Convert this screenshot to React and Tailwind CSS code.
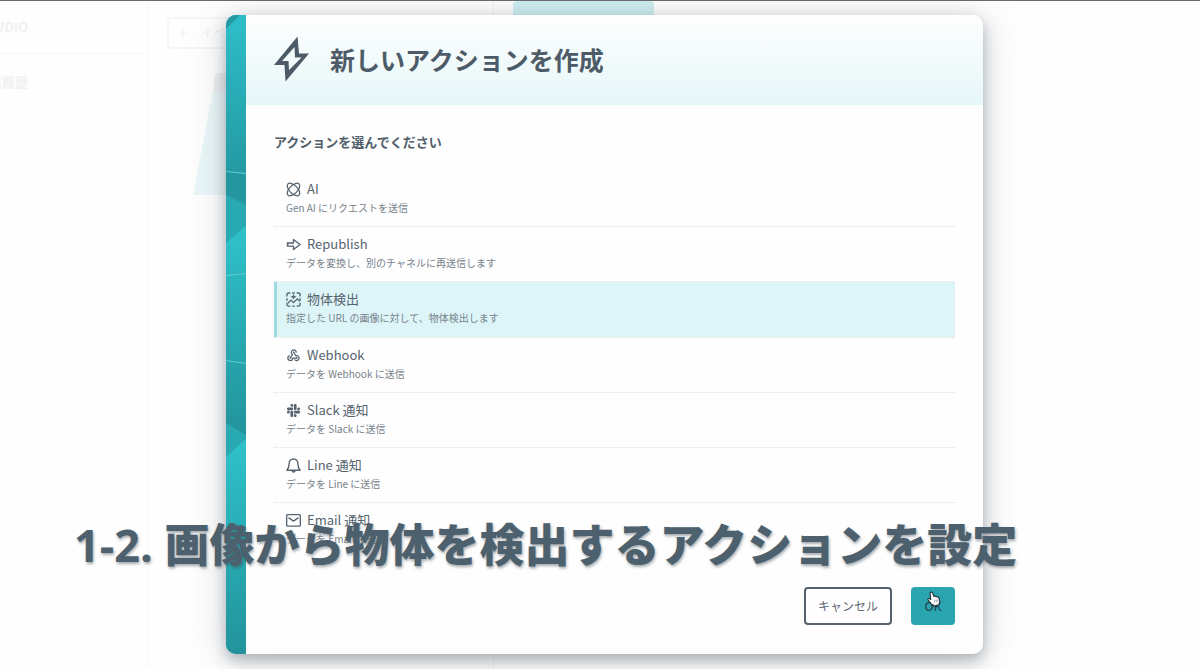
import { useState } from 'react';
import { MdWebhook } from 'react-icons/md';
import { FaSlack } from 'react-icons/fa';

function BoltIcon({ className }) {
  return (
    <svg className={className} viewBox="0 0 36 46" fill="currentColor" fillRule="evenodd" aria-hidden="true">
      <path d="M23.500 .5L25 17.500h10L11.500 45.500L10.500 29H0zM20.500 11L8 25h6.500l.5 9L27.500 21.500H21z" />
    </svg>
  );
}

function AtomIcon({ className }) {
  return (
    <svg className={className} viewBox="0 0 24 24" fill="none" stroke="currentColor" strokeWidth="2" aria-hidden="true">
      <ellipse cx="12" cy="12" rx="12.600" ry="6.400" transform="rotate(45 12 12)" />
      <ellipse cx="12" cy="12" rx="12.600" ry="6.400" transform="rotate(-45 12 12)" />
    </svg>
  );
}

function ArrowIcon({ className }) {
  return (
    <svg className={className} viewBox="0 0 24 24" fill="none" stroke="currentColor" strokeWidth="2.200" strokeLinejoin="round" aria-hidden="true">
      <path d="M2 9.500H12V4l10.500 8L12 20v-5.500H2l1-2.500z" />
    </svg>
  );
}

function DetectIcon({ className }) {
  return (
    <svg className={className} viewBox="0 0 24 24" fill="none" stroke="currentColor" strokeWidth="2.200" aria-hidden="true">
      <path d="M1.500 7V4a2.500 2.500 0 0 1 2.500-2.500h3M10 1.500h4M17 1.500h3A2.500 2.500 0 0 1 22.500 4v3M22.500 10v4M22.500 17v3a2.500 2.500 0 0 1-2.500 2.500h-3M14 22.500h-4M7 22.500H4A2.500 2.500 0 0 1 1.500 20v-3M1.500 14v-4" />
      <path d="M3 18l5-5 4 4 6-6 4 4" />
      <path d="M12 4v7M8.500 7.500h7" />
    </svg>
  );
}

function BellIcon({ className }) {
  return (
    <svg className={className} viewBox="0 0 24 24" fill="none" stroke="currentColor" strokeWidth="2.200" strokeLinejoin="round" aria-hidden="true">
      <path d="M12 1.500c-4.500 0-7 3.300-7 7.500 0 6-1.500 8-3.500 10.500h21C20.500 17 19 15 19 9c0-4.200-2.500-7.500-7-7.500z" />
      <path d="M9.500 20.500a2.600 2.600 0 0 0 5 0" />
    </svg>
  );
}

function MailIcon({ className }) {
  return (
    <svg className={className} viewBox="0 0 24 24" fill="none" stroke="currentColor" strokeWidth="2.200" strokeLinejoin="round" aria-hidden="true">
      <rect x="1" y="2.500" width="22" height="18.500" rx="2" />
      <path d="M4 7.500l8 5.500 8-5.500" />
    </svg>
  );
}

function HandCursor({ className }) {
  return (
    <svg className={className} viewBox="0 0 18 20" fill="#fff" stroke="#26343c" strokeWidth="1.500" strokeLinejoin="round" aria-hidden="true">
      <path d="M5 1.200c1-.4 1.900.1 2.200 1l1.500 4.300c.7-.7 1.900-.5 2.300.4.800-.5 1.800-.2 2.200.6.900-.3 1.800.2 2.100 1.100l1 3.400c.4 1.600 0 3-.9 4.200l.2 1.300-6.800 1.700-.7-1.300c-1.600-.4-3.200-1.900-4.600-3.900L1.300 11c-.6-1.100.8-2.300 1.900-1.500l1.600 1.300L4 3c-.2-.8.200-1.500 1-1.800z" />
      <path d="M9.300 11.500l.7 3M11.500 11l.7 3M13.500 10.500l.6 3" stroke="#7b868c" strokeWidth="1" />
    </svg>
  );
}

/* Faceted teal strip on the left edge of the dialog */
function SideStrip() {
  return (
    <svg className="w-5 shrink-0 self-stretch" viewBox="0 0 20 639" preserveAspectRatio="none" aria-hidden="true">
      <defs>
        <linearGradient id="top" x1="0" y1="0" x2="0" y2="1">
          <stop offset="0" stopColor="#2ebec8" />
          <stop offset="1" stopColor="#249aa3" />
        </linearGradient>
        <linearGradient id="mid" x1="0" y1="0" x2="0" y2="1">
          <stop offset="0" stopColor="#2fc2ca" />
          <stop offset="1" stopColor="#22939b" />
        </linearGradient>
      </defs>
      <rect width="20" height="639" fill="#29a9b1" />
      <path d="M0 0h20v158L0 156z" fill="url(#top)" />
      <path d="M0 0h14L0 14z" fill="#2599a1" />
      <path d="M0 156l20 2v32L0 180z" fill="#23969e" />
      <path d="M0 228l20-17v209L0 408z" fill="url(#mid)" />
      <path d="M0 442l20-18v215H0z" fill="url(#mid)" />
      <path d="M0 156.500l20 2M0 260.500l20-2M0 345.500l20 3" stroke="#5ccdd3" strokeWidth="1" />
    </svg>
  );
}

const actions = [
  { id: 'ai', name: 'AI', description: 'Gen AI にリクエストを送信', Icon: AtomIcon },
  { id: 'republish', name: 'Republish', description: 'データを変換し、別のチャネルに再送信します', Icon: ArrowIcon },
  { id: 'detect', name: '物体検出', description: '指定した URL の画像に対して、物体検出します', Icon: DetectIcon },
  { id: 'webhook', name: 'Webhook', description: 'データを Webhook に送信', Icon: MdWebhook },
  { id: 'slack', name: 'Slack 通知', description: 'データを Slack に送信', Icon: FaSlack },
  { id: 'line', name: 'Line 通知', description: 'データを Line に送信', Icon: BellIcon },
  { id: 'email', name: 'Email 通知', description: 'データを Email に送信', Icon: MailIcon },
];

function ActionRow({ action, selected, onSelect }) {
  const { Icon } = action;
  return (
    <li className="border-b border-dotted border-[#d9dee1] last:border-b-0">
      <button
        type="button"
        aria-pressed={selected}
        onClick={() => onSelect(action.id)}
        className={`block w-full border-l-3 pt-[7px] pl-[9px] text-left ${
          selected ? 'border-[#9adcdf] bg-[#def5f8] pb-[11px]' : 'border-transparent pb-[10px]'
        }`}
      >
        <span className="flex items-center gap-[6px] text-[13px] leading-5 text-[#56636f]">
          <Icon className="size-[15px] shrink-0" />
          {action.name}
        </span>
        <span className="mt-px block text-[10px] leading-4 text-[#76828c]">{action.description}</span>
      </button>
    </li>
  );
}

/* Faded studio screen behind the dialog */
function Backdrop() {
  return (
    <div className="flex min-h-screen border-t border-[#6b6b6e] bg-[#fefefe]" aria-hidden="true">
      <div className="w-[149px] shrink-0 border-r border-[#f9f9f9]">
        <div className="flex h-[53px] items-center border-b border-[#f1f9fa]">
          <div className="flex w-7 justify-end overflow-hidden text-[13px] font-bold whitespace-nowrap text-[#f1f1f2]">STUDIO</div>
        </div>
        <div className="mt-[18px] flex w-7 justify-end overflow-hidden text-[13px] font-bold whitespace-nowrap text-[#f1f1f2]">受信履歴</div>
      </div>
      <div className="w-[345px] shrink-0 border-r border-[#f3f4f5] pt-4 pl-[18px]">
        <div className="flex h-8 w-40 items-center gap-3 rounded border-2 border-[#f5f5f6] px-2 text-xs text-[#f1f1f2]">
          <span>＋</span>
          <span>イベント</span>
        </div>
        <svg className="mt-6 ml-[26px] h-[122px] w-[140px]" viewBox="0 0 140 122">
          <path d="M20 18L22 3q1-3 4-3h114v18z" fill="#eeeef0" />
          <path d="M20 18h120v104H0z" fill="#eaf7f8" />
        </svg>
      </div>
      <div className="flex-1 pl-[19px]">
        <div className="h-20 w-[141px] rounded-t bg-[#cdeff1]"></div>
      </div>
    </div>
  );
}

export default function App() {
  const [selected, setSelected] = useState('detect');

  return (
    <div className="relative overflow-hidden font-['Noto_Sans_CJK_JP',sans-serif]">
      <Backdrop />

      <div className="absolute inset-0 flex items-start justify-center pt-[15px] pl-[9px]">
        <div
          role="dialog"
          aria-labelledby="dialog-title"
          className="flex w-full max-w-[757px] overflow-hidden rounded-[10px] bg-[#fefefe] shadow-[0_6px_14px_rgba(62,78,92,0.35),0_4px_36px_rgba(62,72,82,0.22)]"
        >
          <SideStrip />
          <div className="min-w-0 flex-1">
            <div className="flex h-[90px] items-center gap-5 bg-linear-to-b from-[#fefefe] to-[#e6f7f9] px-7 pb-0.5 text-[#4d5b68]">
              <BoltIcon className="h-[46px] w-9 shrink-0" />
              <h1 id="dialog-title" className="text-[25px] leading-9 font-bold">新しいアクションを作成</h1>
            </div>

            <div className="px-7 pt-[27px] pb-7">
              <h2 className="text-[13px] leading-5 font-bold text-[#515e6a]">アクションを選んでください</h2>
              <ul className="mt-5">
                {actions.map((action) => (
                  <ActionRow key={action.id} action={action} selected={action.id === selected} onSelect={setSelected} />
                ))}
              </ul>

              <div className="mt-[30px] flex justify-end gap-[19px]">
                <button type="button" className="h-[38px] w-[88px] rounded border-2 border-[#55616d] text-xs text-[#5d6974]">
                  キャンセル
                </button>
                <button type="button" className="relative h-[38px] w-11 rounded bg-[#2aa5af] text-xs font-medium text-[#1f4e58]">
                  OK
                  <HandCursor className="absolute top-1 left-4 h-4 w-[14px]" />
                </button>
              </div>
            </div>
          </div>
        </div>
      </div>

      {/* Caption */}
      <p className="pointer-events-none absolute bottom-[91px] left-[74px] font-['Open_Sans','Noto_Sans_CJK_JP',sans-serif] text-[45px] leading-[66px] font-bold whitespace-nowrap text-[#4c606d] text-shadow-[1px_2px_3px_rgba(60,70,80,0.45)]">
        1-2. <span className="font-black">画像から物体を検出するアクションを設定</span>
      </p>
    </div>
  );
}
